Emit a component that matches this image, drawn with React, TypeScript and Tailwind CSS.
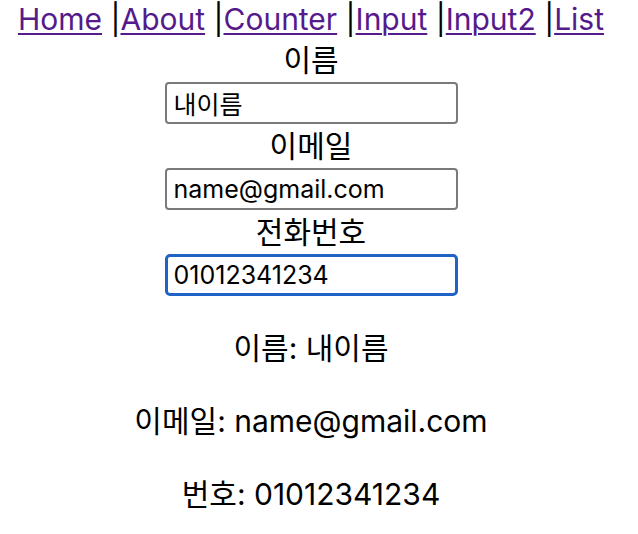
const links = ['Home', 'About', 'Counter', 'Input', 'Input2', 'List']

const fields = [
  { label: '이름', value: '내이름', focused: false },
  { label: '이메일', value: 'name@gmail.com', focused: false },
  { label: '전화번호', value: '01012341234', focused: true },
]

export default function App() {
  return (
    <div className="pr-4 text-center text-black text-[30px] font-[Inter,'Noto_Sans_CJK_KR',sans-serif]">
      {/* Nav */}
      <nav className="leading-[38px]">
        {links.map((name, i) => (
          <span key={name}>
            {i > 0 && ' |'}
            <a href="#" className="text-[#551a8b] underline decoration-2 underline-offset-[3px]">
              {name}
            </a>
          </span>
        ))}
      </nav>

      {/* Form */}
      {fields.map((f) => (
        <div key={f.label}>
          <div className="leading-[44px]">{f.label}</div>
          <input
            readOnly
            value={f.value}
            className={
              f.focused
                ? 'block mx-auto w-[293px] h-[42px] px-[6px] text-[25px] border-[3px] border-[#1f63c6] rounded-[5px] outline-none bg-white'
                : 'block mx-auto w-[293px] h-[42px] px-[7px] text-[25px] border-2 border-[#7a7a7a] rounded-[4px] outline-none bg-white'
            }
          />
        </div>
      ))}

      {/* Output */}
      <div className="mt-8">
        <p className="leading-[41px]">이름: 내이름</p>
        <p className="leading-[41px] mt-8">이메일: name@gmail.com</p>
        <p className="leading-[41px] mt-8">번호: 01012341234</p>
      </div>
    </div>
  )
}
